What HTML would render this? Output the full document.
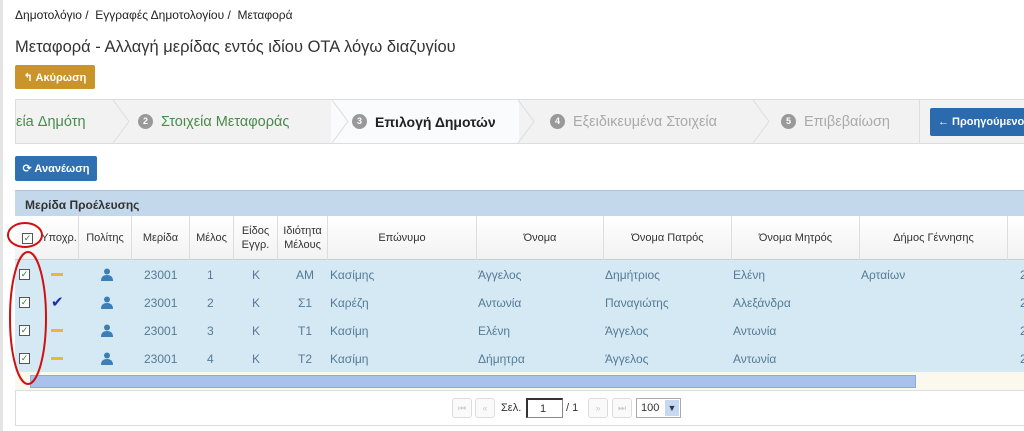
<!DOCTYPE html>
<html><head><meta charset="utf-8"><style>
*{box-sizing:border-box;margin:0;padding:0}
body{width:1024px;height:431px;overflow:hidden;background:#fff;font-family:"Liberation Sans","DejaVu Sans",sans-serif;position:relative;color:#333}
.a{position:absolute}
.bc{left:15px;top:8px;font-size:12px;color:#222}
.title{left:15px;top:38px;font-size:16.5px;color:#333}
.btn{position:absolute;color:#fff;font-size:11px;font-weight:bold;border-radius:2px;display:flex;align-items:center;justify-content:center}
.wiz{left:15px;top:99px;width:905px;height:45px;background:#f2f2f2;border:1px solid #ddd}
.step{position:absolute;top:0;height:43px;display:flex;align-items:center;font-size:14.5px}
.num{display:inline-block;width:15px;height:15px;border-radius:50%;background:#999;color:#fff;font-size:9px;font-weight:bold;text-align:center;line-height:15px;margin-right:8px}
.chev{position:absolute;top:0;width:20px;height:43px}
.th{position:absolute;top:216px;height:44px;border-right:1px solid #ddd;font-size:11px;color:#333;display:flex;align-items:center;justify-content:center;text-align:center;line-height:14px}
.row{position:absolute;left:15px;width:1009px;height:28px;background:#d5e9f5;font-size:12px;color:#557a96}
.row span{position:absolute;top:8px}
.cb{position:absolute;width:11px;height:11px;border:1px solid #555;background:#fff;font-size:9px;line-height:9px;color:#2a8a2a;text-align:center}
.dash{position:absolute;width:12px;height:3px;background:#f0b43c}
.pi{position:absolute;left:86px;top:8px}
.pb{position:absolute;top:398px;width:20px;height:20px;border:1px solid #ddd;border-radius:3px;background:#fafafa;color:#ccc;font-size:9px;text-align:center;line-height:18px}
</style></head><body>
<div class="a" style="left:0;top:0;width:3px;height:431px;background:#e4e4e4"></div>
<div class="a bc">Δημοτολόγιο /&nbsp; Εγγραφές Δημοτολογίου /&nbsp; Μεταφορά</div>
<div class="a title">Μεταφορά - Αλλαγή μερίδας εντός ιδίου ΟΤΑ λόγω διαζυγίου</div>
<div class="btn" style="left:15px;top:65px;width:80px;height:24px;background:#c9952b">↰ Ακύρωση</div>

<div class="a wiz">
 <div class="step" style="left:315px;width:188px;background:#f9fbfd"></div>
 <div class="step" style="left:0;width:110px;color:#4a8a4a">είa Δημότη</div>
 <div class="step" style="left:122px;color:#4a8a4a"><span class="num">2</span>Στοιχεία Μεταφοράς</div>
 <div class="step" style="left:336px;color:#222;font-weight:bold;font-size:14px"><span class="num">3</span>Επιλογή Δημοτών</div>
 <div class="step" style="left:534px;color:#aaa"><span class="num">4</span>Εξειδικευμένα Στοιχεία</div>
 <div class="step" style="left:765px;color:#aaa"><span class="num">5</span>Επιβεβαίωση</div>
 <svg class="chev" style="left:95px" viewBox="0 0 20 43"><path d="M2 0 L18 21.5 L2 43" fill="none" stroke="#ddd"/></svg>
 <svg class="chev" style="left:314px" viewBox="0 0 20 43"><path d="M2 0 L18 21.5 L2 43" fill="none" stroke="#ddd"/></svg>
 <svg class="chev" style="left:500px" viewBox="0 0 20 43"><path d="M2 0 L18 21.5 L2 43" fill="none" stroke="#ddd"/></svg>
 <svg class="chev" style="left:735px" viewBox="0 0 20 43"><path d="M2 0 L18 21.5 L2 43" fill="none" stroke="#ddd"/></svg>
</div>
<div class="a" style="left:920px;top:99px;width:104px;height:45px;background:#f2f2f2;border-top:1px solid #ddd;border-bottom:1px solid #ddd"></div>
<div class="btn" style="left:930px;top:108px;width:100px;height:28px;background:#2a6aad;justify-content:flex-start;padding-left:8px">← Προηγούμενο</div>

<div class="btn" style="left:15px;top:156px;width:82px;height:25px;background:#3070b0">⟳ Ανανέωση</div>

<div class="a" style="left:15px;top:190px;width:1009px;height:26px;background:#c3d8ea;border-top:1px solid #aac5dd;font-size:12px;font-weight:bold;color:#333;padding:7px 0 0 10px">Μερίδα Προέλευσης</div>
<div class="a" style="left:15px;top:216px;width:1009px;height:44px;background:linear-gradient(#fff,#f2f2f2);border-bottom:1px solid #ccc"></div>
<div class="th" style="left:15px;width:25px;border:none"><div class="cb" style="position:static">✓</div></div>
<div class="th" style="left:40px;width:39px">Υποχρ.</div>
<div class="th" style="left:79px;width:53px">Πολίτης</div>
<div class="th" style="left:132px;width:58px">Μερίδα</div>
<div class="th" style="left:190px;width:44px">Μέλος</div>
<div class="th" style="left:234px;width:44px">Είδος<br>Εγγρ.</div>
<div class="th" style="left:278px;width:50px">Ιδιότητα<br>Μέλους</div>
<div class="th" style="left:328px;width:149px">Επώνυμο</div>
<div class="th" style="left:477px;width:127px">Όνομα</div>
<div class="th" style="left:604px;width:128px">Όνομα Πατρός</div>
<div class="th" style="left:732px;width:128px">Όνομα Μητρός</div>
<div class="th" style="left:860px;width:148px">Δήμος Γέννησης</div>

<div class="row" style="top:260px"><div class="cb" style="left:4px;top:9px">✓</div><div class="dash" style="left:36px;top:13px"></div><svg class="pi" width="12" height="13" viewBox="0 0 12 13"><circle cx="6" cy="3.5" r="3" fill="#3d7fb5"/><path d="M0 13 Q0 7 6 7 Q12 7 12 13Z" fill="#3d7fb5"/></svg><span style="left:129px">23001</span><span style="left:192px">1</span><span style="left:237px">K</span><span style="left:281px">AM</span><span style="left:315px">Κασίμης</span><span style="left:463px">Άγγελος</span><span style="left:590px">Δημήτριος</span><span style="left:718px">Ελένη</span><span style="left:846px">Αρταίων</span><span style="left:1005px">2</span></div>
<div class="row" style="top:288px"><div class="cb" style="left:4px;top:9px">✓</div><span style="left:36px;top:5px;color:#1a2fa8;font-size:15px;font-weight:bold">✔</span><svg class="pi" width="12" height="13" viewBox="0 0 12 13"><circle cx="6" cy="3.5" r="3" fill="#3d7fb5"/><path d="M0 13 Q0 7 6 7 Q12 7 12 13Z" fill="#3d7fb5"/></svg><span style="left:129px">23001</span><span style="left:192px">2</span><span style="left:237px">K</span><span style="left:283px">Σ1</span><span style="left:315px">Καρέζη</span><span style="left:463px">Αντωνία</span><span style="left:590px">Παναγιώτης</span><span style="left:718px">Αλεξάνδρα</span><span style="left:1005px">2</span></div>
<div class="row" style="top:316px"><div class="cb" style="left:4px;top:9px">✓</div><div class="dash" style="left:36px;top:13px"></div><svg class="pi" width="12" height="13" viewBox="0 0 12 13"><circle cx="6" cy="3.5" r="3" fill="#3d7fb5"/><path d="M0 13 Q0 7 6 7 Q12 7 12 13Z" fill="#3d7fb5"/></svg><span style="left:129px">23001</span><span style="left:192px">3</span><span style="left:237px">K</span><span style="left:283px">T1</span><span style="left:315px">Κασίμη</span><span style="left:463px">Ελένη</span><span style="left:590px">Άγγελος</span><span style="left:718px">Αντωνία</span><span style="left:1005px">2</span></div>
<div class="row" style="top:344px"><div class="cb" style="left:4px;top:9px">✓</div><div class="dash" style="left:36px;top:13px"></div><svg class="pi" width="12" height="13" viewBox="0 0 12 13"><circle cx="6" cy="3.5" r="3" fill="#3d7fb5"/><path d="M0 13 Q0 7 6 7 Q12 7 12 13Z" fill="#3d7fb5"/></svg><span style="left:129px">23001</span><span style="left:192px">4</span><span style="left:237px">K</span><span style="left:283px">T2</span><span style="left:315px">Κασίμη</span><span style="left:463px">Δήμητρα</span><span style="left:590px">Άγγελος</span><span style="left:718px">Αντωνία</span><span style="left:1005px">2</span></div>
<div class="a" style="left:15px;top:372px;width:1009px;height:18px;background:#fbf8ee"></div>
<div class="a" style="left:30px;top:375px;width:886px;height:13px;background:#a9c2ec;border:1px solid #8fa8d6"></div>
<div class="a" style="left:15px;top:390px;width:1009px;height:36px;border:1px solid #ddd;border-right:none"></div>
<div class="pb" style="left:452px">⏮</div><div class="pb" style="left:475px">«</div>
<div class="a" style="left:501px;top:402px;font-size:11px;color:#333">Σελ.</div>
<div class="a" style="left:526px;top:398px;width:37px;height:20px;border:1px solid #888;border-top:2px solid #333;border-left:2px solid #333;font-size:11px;padding:3px 0 0 12px">1</div>
<div class="a" style="left:566px;top:402px;font-size:11px;color:#333">/ 1</div>
<div class="pb" style="left:588px">»</div><div class="pb" style="left:612px">⏭</div>
<div class="a" style="left:636px;top:398px;width:45px;height:20px;border:1px solid #aaa;font-size:11px;padding:3px 0 0 4px">100<span style="position:absolute;right:1px;top:1px;width:14px;height:16px;background:#c8d8f0;color:#335;font-size:9px;text-align:center;line-height:16px">▼</span></div>

<svg class="a" style="left:0;top:0" width="1024" height="431"><ellipse cx="25" cy="235" rx="17" ry="12" fill="none" stroke="#d01010" stroke-width="2"/><ellipse cx="28" cy="318" rx="18" ry="66" fill="none" stroke="#d01010" stroke-width="2"/></svg>
</body></html>
